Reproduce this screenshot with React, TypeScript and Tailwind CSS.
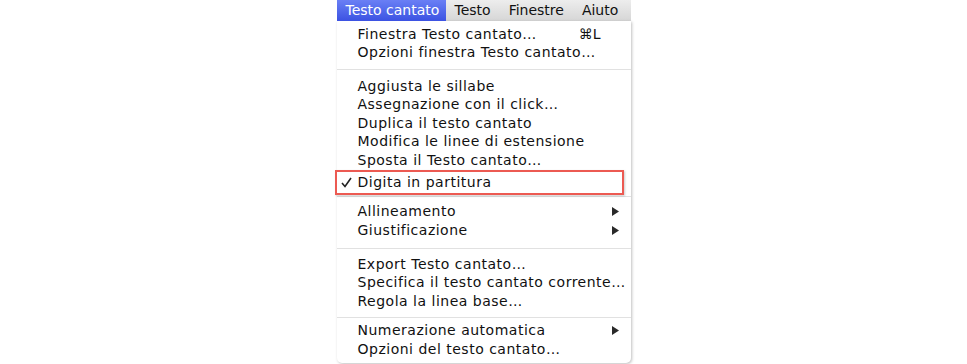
import React from "react";

type Item = { label: string; shortcut?: string; sub?: boolean };

const font = { fontFamily: '"DejaVu Sans", "Liberation Sans", sans-serif' };

function Arrow() {
  return (
    <svg width="7" height="9" viewBox="0 0 7 9" className="mr-[8px]">
      <path d="M0 0 L7 4.5 L0 9 Z" fill="#2a2a2a" />
    </svg>
  );
}

function Check() {
  return (
    <svg width="11" height="11" viewBox="0 0 11 11" className="mr-[6px]">
      <path d="M1 6 L4 9.5 L10 1" fill="none" stroke="#222" strokeWidth="1.6" />
    </svg>
  );
}

function Row({ item, h = "h-[18.5px]" }: { item: Item; h?: string }) {
  return (
    <div className={`flex items-center ${h} pl-[21px] pr-[4px]`}>
      <span className="flex-1 whitespace-nowrap">{item.label}</span>
      {item.shortcut && <span className="mr-[26px] tracking-normal">{item.shortcut}</span>}
      {item.sub && <Arrow />}
    </div>
  );
}

// separator: padding puts the 1px line inside a fixed block
function Sep({ h, top }: { h: string; top: string }) {
  return (
    <div className={`${h} ${top}`}>
      <div className="h-px bg-[#e1e1e1]" />
    </div>
  );
}

export default function App() {
  return (
    <div className="w-[967px] h-[364px] bg-white overflow-hidden" style={font}>
      <div className="w-[294px] mx-auto">
        {/* menu bar */}
        <div className="flex h-[21px] text-[14px] text-[#111] bg-gradient-to-b from-[#ededed] to-[#d6d6d6]">
          <div className="flex items-center pl-[9px] w-[109px] bg-gradient-to-b from-[#6a7ff5] to-[#3c52e2] text-white">
            Testo cantato
          </div>
          <div className="flex items-center pl-[9px] gap-[18px]">
            <span>Testo</span>
            <span>Finestre</span>
            <span>Aiuto</span>
          </div>
        </div>

        {/* dropdown */}
        <div className="bg-white rounded-b-[5px] shadow-[1px_1px_3px_rgba(0,0,0,0.25)] text-[14px] tracking-[0.5px] text-[#111] pt-[4px] pb-[4px]">
          <Row item={{ label: "Finestra Testo cantato…", shortcut: "⌘L" }} h="h-[18px]" />
          <Row item={{ label: "Opzioni finestra Testo cantato…" }} h="h-[18px]" />
          <Sep h="h-[16px]" top="pt-[8px]" />
          <Row item={{ label: "Aggiusta le sillabe" }} />
          <Row item={{ label: "Assegnazione con il click…" }} />
          <Row item={{ label: "Duplica il testo cantato" }} />
          <Row item={{ label: "Modifica le linee di estensione" }} />
          <Row item={{ label: "Sposta il Testo cantato…" }} />
          <div className="relative flex items-center h-[25px] pl-[4px]">
            <Check />
            <span>Digita in partitura</span>
            <div className="absolute top-0 -left-[2px] right-[7px] bottom-0 border-2 border-[#ec5a52] shadow-[1px_1px_2px_rgba(0,0,0,0.2)]" />
          </div>
          <Sep h="h-[8px]" top="pt-[1.5px]" />
          <Row item={{ label: "Allineamento", sub: true }} />
          <Row item={{ label: "Giustificazione", sub: true }} />
          <Sep h="h-[15.5px]" top="pt-[8px]" />
          <Row item={{ label: "Export Testo cantato…" }} />
          <Row item={{ label: "Specifica il testo cantato corrente…" }} />
          <Row item={{ label: "Regola la linea base…" }} />
          <Sep h="h-[11px]" top="pt-[6px]" />
          <Row item={{ label: "Numerazione automatica", sub: true }} />
          <Row item={{ label: "Opzioni del testo cantato…" }} />
        </div>
      </div>
    </div>
  );
}
